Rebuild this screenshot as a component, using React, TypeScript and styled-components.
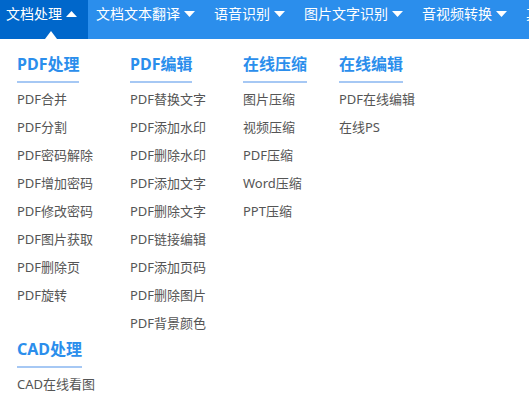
import { FC } from 'react';
import styled, { createGlobalStyle } from 'styled-components';

const colors = {
  nav: '#2b8eec',
  navActive: '#0067cb',
  heading: '#2b8eec',
  underline: '#a6c8f4',
  text: '#555555',
};

const GlobalStyle = createGlobalStyle`
  html, body {
    margin: 0;
    padding: 0;
    background: #ffffff;
  }

  body {
    font-family: 'Noto Sans', 'Noto Sans CJK SC', sans-serif;
  }
`;

const navItems = ['文档处理', '文档文本翻译', '语音识别', '图片文字识别', '音视频转换', '其他'];

type Group = { title: string; items: string[] };

const topGroups: Group[] = [
  {
    title: 'PDF处理',
    items: ['PDF合并', 'PDF分割', 'PDF密码解除', 'PDF增加密码', 'PDF修改密码', 'PDF图片获取', 'PDF删除页', 'PDF旋转'],
  },
  {
    title: 'PDF编辑',
    items: [
      'PDF替换文字',
      'PDF添加水印',
      'PDF删除水印',
      'PDF添加文字',
      'PDF删除文字',
      'PDF链接编辑',
      'PDF添加页码',
      'PDF删除图片',
      'PDF背景颜色',
    ],
  },
  {
    title: '在线压缩',
    items: ['图片压缩', '视频压缩', 'PDF压缩', 'Word压缩', 'PPT压缩'],
  },
  {
    title: '在线编辑',
    items: ['PDF在线编辑', '在线PS'],
  },
];

const bottomGroups: Group[] = [{ title: 'CAD处理', items: ['CAD在线看图'] }];

const Caret: FC<{ up?: boolean }> = ({ up }) => (
  <CaretSvg width="11" height="6" viewBox="0 0 11 6">
    {up ? <polygon points="0,6 11,6 5.5,0" fill="#fff" /> : <polygon points="0,0 11,0 5.5,6" fill="#fff" />}
  </CaretSvg>
);

const Column: FC<{ group: Group }> = ({ group }) => (
  <ColumnBox>
    <Heading>{group.title}</Heading>
    <List>
      {group.items.map((item) => (
        <Item key={item}>{item}</Item>
      ))}
    </List>
  </ColumnBox>
);

export default function App() {
  return (
    <>
      <GlobalStyle />
      <Nav>
        {navItems.map((label, i) => (
          <NavItem key={label} $active={i === 0}>
            <NavLabel>{label}</NavLabel>
            <Caret up={i === 0} />
            {i === 0 && <Pointer />}
          </NavItem>
        ))}
      </Nav>
      <Panel>
        <Row>
          {topGroups.map((g) => (
            <Column key={g.title} group={g} />
          ))}
        </Row>
        <Row>
          {bottomGroups.map((g) => (
            <Column key={g.title} group={g} />
          ))}
        </Row>
      </Panel>
    </>
  );
}

const Nav = styled.nav`
  display: flex;
  height: 39px;
  background: ${colors.nav};
  overflow: hidden;
  white-space: nowrap;
`;

const NavItem = styled.div<{ $active: boolean }>`
  position: relative;
  display: flex;
  align-items: flex-start;
  flex-shrink: 0;
  height: 39px;
  padding: 5px 11px 0 8px;
  box-sizing: border-box;
  background: ${({ $active }) => ($active ? colors.navActive : 'transparent')};
  color: #ffffff;
  cursor: pointer;

  &:first-child {
    padding-left: 6px;
  }
`;

const NavLabel = styled.span`
  font-size: 14px;
  line-height: 18px;
`;

const CaretSvg = styled.svg`
  display: block;
  margin: 6px 0 0 4px;
`;

const Pointer = styled.span`
  position: absolute;
  left: 45px;
  bottom: 0;
  width: 0;
  height: 0;
  border-left: 6px solid transparent;
  border-right: 6px solid transparent;
  border-bottom: 8px solid #ffffff;
`;

const Panel = styled.div`
  padding: 13px 17px 0;
`;

const Row = styled.div`
  display: grid;
  grid-template-columns: 113px 113px 96px auto;
  align-items: start;
`;

const ColumnBox = styled.div`
  display: flex;
  flex-direction: column;
  align-items: flex-start;
`;

const Heading = styled.h3`
  margin: 0;
  padding-bottom: 5px;
  font-size: 16px;
  line-height: 24px;
  font-weight: 700;
  color: ${colors.heading};
  border-bottom: 2px solid ${colors.underline};
`;

const List = styled.ul`
  margin: 2px 0 0;
  padding: 0;
  list-style: none;
`;

const Item = styled.li`
  font-size: 13px;
  line-height: 28px;
  color: ${colors.text};
  white-space: nowrap;
  cursor: pointer;
`;
